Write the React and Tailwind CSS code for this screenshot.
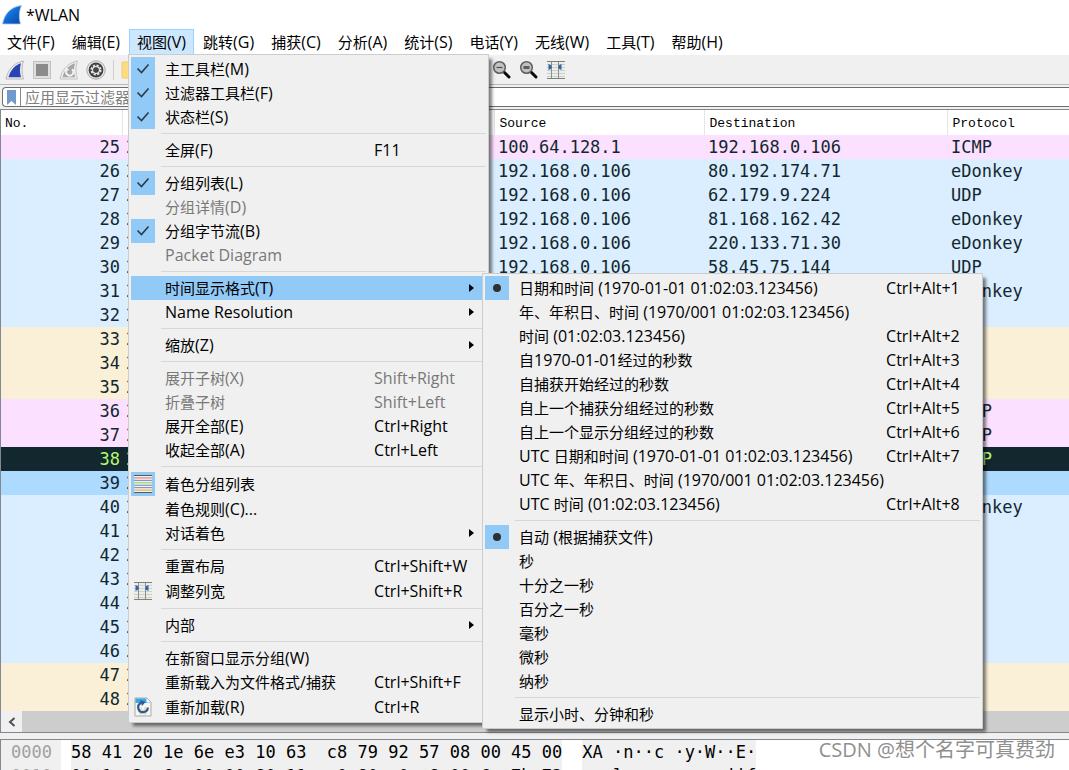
const UI = "font-['Open_Sans','Noto_Sans_CJK_SC',sans-serif]";
const MONO = "font-['DejaVu_Sans_Mono','Noto_Sans_CJK_SC',monospace]";
const HEAD = "font-['Liberation_Mono','Noto_Sans_CJK_SC',monospace]";

function Logo() {
  return (
    <svg width="20" height="20" viewBox="0 0 20 20" aria-hidden="true">
      <defs>
        <linearGradient id="logo" x1="0" y1="0" x2="1" y2="1">
          <stop offset="0" stopColor="#3fa0ee" />
          <stop offset="0.5" stopColor="#0f6ad2" />
          <stop offset="1" stopColor="#0a48a6" />
        </linearGradient>
      </defs>
      <path d="M0.5 19 C2.5 9 8 2 19.5 0.5 C17 6 16.8 13 18.5 19 Z" fill="url(#logo)" stroke="#a9cdf0" strokeWidth="0.8" />
    </svg>
  );
}

function FinIcon() {
  return (
    <svg width="20" height="20" viewBox="0 0 20 20" aria-hidden="true">
      <path d="M1 19 C3 10 8 3 18.5 1 C16.5 7 16.5 12 18.5 19 Z" fill="#ececec" stroke="#b8b8b8" strokeWidth="1" />
      <path d="M3.5 17.3 C5.5 10 10 5 16 3.2 C14.6 8 14.6 12 16 17.3 Z" fill="#2a43b4" />
    </svg>
  );
}

function StopIcon() {
  return (
    <svg width="20" height="20" viewBox="0 0 20 20" aria-hidden="true">
      <rect x="1.5" y="1.5" width="17" height="17" fill="#dedede" stroke="#c2c2c2" />
      <rect x="4" y="4" width="12" height="12" fill="#8a8a8a" />
    </svg>
  );
}

function RestartIcon() {
  return (
    <svg width="20" height="20" viewBox="0 0 20 20" aria-hidden="true">
      <path d="M1 19 C3 10 8 3 18.5 1 C16.5 7 16.5 12 18.5 19 Z" fill="#ececec" stroke="#c4c4c4" strokeWidth="1" />
      <path d="M3.5 17.3 C5.5 10 10 5 16 3.2 C14.6 8 14.6 12 16 17.3 Z" fill="#a6a6a6" />
      <path d="M13 9.2 A3.6 3.6 0 1 1 7.6 10.4" fill="none" stroke="#f6f6f6" strokeWidth="1.8" />
      <path d="M5.8 11.2 L7.2 7.4 L10.4 10 Z" fill="#f6f6f6" />
    </svg>
  );
}

function OptionsIcon() {
  return (
    <svg width="20" height="20" viewBox="0 0 20 20" aria-hidden="true">
      <circle cx="10" cy="10" r="9.2" fill="#e6e6e6" stroke="#a8a8a8" />
      <circle cx="10" cy="10" r="7.4" fill="#404040" />
      <circle cx="10" cy="10" r="4.6" fill="none" stroke="#e4e4e4" strokeWidth="2" strokeDasharray="2.2 1.41" />
      <circle cx="10" cy="10" r="3.4" fill="none" stroke="#e4e4e4" strokeWidth="1.2" />
      <circle cx="10" cy="10" r="2.4" fill="#444444" />
    </svg>
  );
}

function FolderIcon() {
  return (
    <svg width="20" height="20" viewBox="0 0 20 20" aria-hidden="true">
      <path d="M1 2 H8 L10 4 H18 V18 H1 Z" fill="#fbdc83" stroke="#f0cd6c" />
    </svg>
  );
}

function Magnifier({ reset }) {
  return (
    <svg width="20" height="20" viewBox="0 0 20 20" aria-hidden="true">
      <path d="M12 12 L17 17" stroke="#0a0a0a" strokeWidth="3" strokeLinecap="round" />
      <circle cx="7.5" cy="7.5" r="5.8" fill="#c0c2c3" stroke="#5c5e60" strokeWidth="1.5" />
      {reset ? (
        <rect x="4.5" y="6" width="6" height="3" fill="#5a5c5e" />
      ) : (
        <path d="M4.5 7.5 H10.5" stroke="#4a4c4e" strokeWidth="1.2" />
      )}
    </svg>
  );
}

function ColumnsIcon() {
  return (
    <svg width="20" height="20" viewBox="0 0 20 20" aria-hidden="true">
      <rect x="1" y="1" width="18" height="18" fill="#eceeea" />
      <path d="M1 4.5 H19 M1 7.5 H19 M1 10.5 H19 M1 13.5 H19 M1 16.5 H19" stroke="#cdd2c8" />
      <path d="M1 1.5 H19 M1 18.5 H19" stroke="#7d7f7b" />
      <path d="M5.5 2 V18 M12.5 2 V18" stroke="#8c8f8a" />
      <path d="M2.5 4 L5.5 5.5 V8.5 L2.5 10 Z M15.5 4 L12.5 5.5 V8.5 L15.5 10 Z" fill="#2e63ad" />
    </svg>
  );
}

function ColorizeIcon() {
  const lines = ['#5a5a5a', '#e07070', '#5b8fd0', '#8fd04c', '#5b8fd0', '#8a80b0', '#d0b040', '#5a5a5a'];
  return (
    <svg width="20" height="20" viewBox="0 0 20 20" aria-hidden="true">
      <rect x="1" y="1" width="18" height="18" fill="#f3f1ea" />
      {lines.map((c, i) => (
        <rect key={i} x="1" y={1 + i * 2.43} width="18" height="1" fill={c} />
      ))}
    </svg>
  );
}

function ReloadIcon() {
  return (
    <svg width="20" height="20" viewBox="0 0 20 20" aria-hidden="true">
      <path d="M2 1 H14 L18 5 V19 H2 Z" fill="#f7f7f0" stroke="#a9aba4" />
      <path d="M2.5 1.5 H14 L17.5 5 V6 H2.5 Z" fill="#3aa7e6" />
      <path d="M13.5 1 L18 5.5 H13.5 Z" fill="#fff" />
      <path d="M6 13 h8 M6 16 h8 M8 10 v8 M12 10 v8" stroke="#cfd1c8" />
      <path d="M8 6 A4.8 4.8 0 1 0 14.8 10.5" fill="none" stroke="#33588f" strokeWidth="2.2" />
      <path d="M7 3 L12.5 5 L9 9 Z" fill="#33588f" />
    </svg>
  );
}

function Check() {
  return (
    <svg width="14" height="12" viewBox="0 0 14 12" aria-hidden="true">
      <path d="M1.5 5.5 L5.5 9.5 L12.5 1.5" fill="none" stroke="#2c3a46" strokeWidth="1.6" />
    </svg>
  );
}

function Bullet() {
  return (
    <svg width="8" height="8" viewBox="0 0 8 8" aria-hidden="true">
      <circle cx="4" cy="4" r="4" fill="#303030" />
    </svg>
  );
}

function Arrow() {
  return (
    <svg width="5" height="8" viewBox="0 0 5 8" aria-hidden="true">
      <path d="M0 0 L5 4 L0 8 Z" fill="#000" />
    </svg>
  );
}

const TIME_FORMATS = [
  { label: '日期和时间 (1970-01-01 01:02:03.123456)', keys: 'Ctrl+Alt+1', mark: 'bullet' },
  { label: '年、年积日、时间 (1970/001 01:02:03.123456)' },
  { label: '时间 (01:02:03.123456)', keys: 'Ctrl+Alt+2' },
  { label: '自1970-01-01经过的秒数', keys: 'Ctrl+Alt+3' },
  { label: '自捕获开始经过的秒数', keys: 'Ctrl+Alt+4' },
  { label: '自上一个捕获分组经过的秒数', keys: 'Ctrl+Alt+5' },
  { label: '自上一个显示分组经过的秒数', keys: 'Ctrl+Alt+6' },
  { label: 'UTC 日期和时间 (1970-01-01 01:02:03.123456)', keys: 'Ctrl+Alt+7' },
  { label: 'UTC 年、年积日、时间 (1970/001 01:02:03.123456)' },
  { label: 'UTC 时间 (01:02:03.123456)', keys: 'Ctrl+Alt+8' },
  null,
  { label: '自动 (根据捕获文件)', mark: 'bullet' },
  { label: '秒' },
  { label: '十分之一秒' },
  { label: '百分之一秒' },
  { label: '毫秒' },
  { label: '微秒' },
  { label: '纳秒' },
  null,
  { label: '显示小时、分钟和秒' },
];

const VIEW_MENU = [
  { label: '主工具栏(M)', mark: 'check' },
  { label: '过滤器工具栏(F)', mark: 'check' },
  { label: '状态栏(S)', mark: 'check' },
  null,
  { label: '全屏(F)', keys: 'F11' },
  null,
  { label: '分组列表(L)', mark: 'check' },
  { label: '分组详情(D)', disabled: true },
  { label: '分组字节流(B)', mark: 'check' },
  { label: 'Packet Diagram', disabled: true },
  null,
  { label: '时间显示格式(T)', submenu: TIME_FORMATS, open: true },
  { label: 'Name Resolution', submenu: [] },
  null,
  { label: '缩放(Z)', submenu: [] },
  null,
  { label: '展开子树(X)', keys: 'Shift+Right', disabled: true },
  { label: '折叠子树', keys: 'Shift+Left', disabled: true },
  { label: '展开全部(E)', keys: 'Ctrl+Right' },
  { label: '收起全部(A)', keys: 'Ctrl+Left' },
  null,
  { label: '着色分组列表', icon: <ColorizeIcon />, marked: true },
  { label: '着色规则(C)...' },
  { label: '对话着色', submenu: [] },
  null,
  { label: '重置布局', keys: 'Ctrl+Shift+W' },
  { label: '调整列宽', keys: 'Ctrl+Shift+R', icon: <ColumnsIcon /> },
  null,
  { label: '内部', submenu: [] },
  null,
  { label: '在新窗口显示分组(W)' },
  { label: '重新载入为文件格式/捕获', keys: 'Ctrl+Shift+F' },
  { label: '重新加载(R)', keys: 'Ctrl+R', icon: <ReloadIcon /> },
];

// Latin runs are set one size above the Chinese text around them.
function Mixed({ text }) {
  return text.split(/([\x20-\x7e]+)/).map((part, i) =>
    i % 2 ? (
      <span key={i} className="text-[16px]">
        {part}
      </span>
    ) : (
      part
    ),
  );
}

function Menu({ items, keysWidth, label }) {
  return (
    <ul
      role="menu"
      aria-label={label}
      className="w-full border border-[#cccccc] bg-[#f0f0f0] px-0.5 py-0.5 text-left text-[15px] leading-6 text-black shadow-[4px_4px_3px_-1px_rgba(0,0,0,0.5)]"
    >
      {items.map((item, i) =>
        item === null ? (
          <li key={i} role="separator" className="flex h-[9px] items-center pl-[30px]">
            <span className="h-px w-full bg-[#d7d7d7]" />
          </li>
        ) : (
          <li key={i} role="none" className="relative">
            <button
              role="menuitem"
              type="button"
              disabled={item.disabled}
              className={`flex w-full items-center whitespace-nowrap text-left disabled:text-[#787878] ${
                item.icon ? 'h-[26px]' : 'h-6'
              } ${item.open ? 'bg-[#91c9f7]' : ''}`}
            >
              <span
                className={`mr-2.5 flex size-6 shrink-0 items-center justify-center ${
                  item.mark || item.marked ? 'bg-[#91c9f7]' : ''
                }`}
              >
                {item.mark === 'check' && <Check />}
                {item.mark === 'bullet' && <Bullet />}
                {item.icon}
              </span>
              <span className="flex-1 whitespace-pre">
                <Mixed text={item.label} />
              </span>
              {item.keys && <span className={`text-[16px] ${keysWidth}`}>{item.keys}</span>}
              {item.submenu && (
                <span className="mr-3">
                  <Arrow />
                </span>
              )}
            </button>
            {item.open && (
              <div className="absolute -top-[3px] left-[351px] z-20 w-[501px]">
                <Menu items={item.submenu} keysWidth="w-[94px]" label={item.label} />
              </div>
            )}
          </li>
        ),
      )}
    </ul>
  );
}

const MENUS = [
  '文件(F)', '编辑(E)', '视图(V)', '跳转(G)', '捕获(C)', '分析(A)', '统计(S)', '电话(Y)', '无线(W)', '工具(T)', '帮助(H)',
];

const TONES = {
  pink: 'bg-[#fce0ff] text-[#12272e]',
  blue: 'bg-[#daeeff] text-[#12272e]',
  cream: 'bg-[#faf0d7] text-[#12272e]',
  black: 'bg-[#12272e] text-[#b7f774]',
  selected: 'bg-[#addaff] text-[#12272e]',
};

const PACKETS = [
  [25, 'pink', '100.64.128.1', '192.168.0.106', 'ICMP'],
  [26, 'blue', '192.168.0.106', '80.192.174.71', 'eDonkey'],
  [27, 'blue', '192.168.0.106', '62.179.9.224', 'UDP'],
  [28, 'blue', '192.168.0.106', '81.168.162.42', 'eDonkey'],
  [29, 'blue', '192.168.0.106', '220.133.71.30', 'eDonkey'],
  [30, 'blue', '192.168.0.106', '58.45.75.144', 'UDP'],
  [31, 'blue', '', '', 'eDonkey'],
  [32, 'blue', '', '', ''],
  [33, 'cream', '', '', ''],
  [34, 'cream', '', '', ''],
  [35, 'cream', '', '', ''],
  [36, 'pink', '', '', 'ICMP'],
  [37, 'pink', '', '', 'ICMP'],
  [38, 'black', '', '', 'ICMP'],
  [39, 'selected', '', '', ''],
  [40, 'blue', '', '', 'eDonkey'],
  [41, 'blue', '', '', ''],
  [42, 'blue', '', '', ''],
  [43, 'blue', '', '', ''],
  [44, 'blue', '', '', ''],
  [45, 'blue', '', '', ''],
  [46, 'blue', '', '', ''],
  [47, 'cream', '', '', ''],
  [48, 'cream', '', '', ''],
];

const HEX = [
  ['0000', '58 41 20 1e 6e e3 10 63  c8 79 92 57 08 00 45 00', 'XA ·n··c ·y·W··E·'],
  ['0010', '00 1c 2c 6c 00 00 80 11  c0 80 c0 a8 00 6a 7b 73', '··,l···· ·····jif'],
];

function Tool({ label, children }) {
  return (
    <button type="button" aria-label={label} className="flex size-5 items-center justify-center">
      {children}
    </button>
  );
}

export default function App() {
  return (
    <div className={`flex h-screen w-full flex-col overflow-hidden bg-[#f0f0f0] text-[15px] text-black ${UI}`}>
      <header className="flex h-[29px] shrink-0 items-center gap-1 bg-white pl-0.5">
        <Logo />
        <h1 className="text-[16px]">*WLAN</h1>
      </header>

      <nav aria-label="主菜单" className="-ml-px flex h-[26px] shrink-0 items-stretch gap-px bg-white">
        {MENUS.map((name, i) => (
          <div key={name} className="relative flex">
            <button
              type="button"
              className={`border px-[7px] leading-6 whitespace-nowrap ${
                i === 2 ? 'border-[#99d1ff] bg-[#cce8ff]' : 'border-transparent'
              }`}
            >
              <Mixed text={name} />
            </button>
            {i === 2 && (
              <div className="absolute top-[25px] -left-px z-10 w-[361px]">
                <Menu items={VIEW_MENU} keysWidth="w-[112px]" label={name} />
              </div>
            )}
          </div>
        ))}
      </nav>

      <div className="flex h-[30px] shrink-0 items-center border-b border-[#b8b8b8] pl-[5px]">
        <div className="flex flex-1 items-center gap-[7px]">
          <Tool label="开始捕获"><FinIcon /></Tool>
          <Tool label="停止捕获"><StopIcon /></Tool>
          <Tool label="重新开始捕获"><RestartIcon /></Tool>
          <Tool label="捕获选项"><OptionsIcon /></Tool>
          <span className="h-5 w-px bg-[#cfcfcf]" />
          <Tool label="打开"><FolderIcon /></Tool>
          <div className="ml-[344px] flex gap-[7px]">
            <Tool label="缩小"><Magnifier /></Tool>
            <Tool label="正常大小"><Magnifier reset /></Tool>
            <Tool label="调整列宽"><ColumnsIcon /></Tool>
          </div>
        </div>
      </div>

      <div className="flex h-6 shrink-0 flex-col py-0.5 pl-0.5">
        <div className="flex min-h-0 flex-1 items-stretch rounded-l border border-r-0 border-[#6e6e6e] bg-white">
          <button type="button" aria-label="书签" className="flex w-[18px] items-center justify-center border-r border-[#8a8a8a]">
            <svg width="9" height="15" viewBox="0 0 9 15" aria-hidden="true">
              <path d="M0 0 H9 V15 L4.5 11 L0 15 Z" fill="#7299cc" />
            </svg>
          </button>
          <input
            type="text"
            aria-label="显示过滤器"
            placeholder="应用显示过滤器"
            className="min-w-0 flex-1 bg-transparent pl-1 text-[15px] outline-none placeholder:text-[#808080]"
          />
        </div>
      </div>

      <main className="flex shrink-0 flex-col border border-r-0 border-[#828790] bg-white">
        <table className="w-full table-fixed border-collapse">
          <colgroup>
            <col className="w-[121px]" />
            <col className="w-[372px]" />
            <col className="w-[210px]" />
            <col className="w-[243px]" />
            <col />
          </colgroup>
          <thead>
            <tr className={`h-[25px] text-left text-[13px] ${HEAD}`}>
              <th className="border-r border-[#e5e5e5] p-0 pt-0.5 pl-1 font-normal">No.</th>
              <th className="border-r border-[#e5e5e5] p-0 font-normal" aria-label="Time" />
              <th className="border-r border-[#e5e5e5] p-0 pt-0.5 pl-[5px] font-normal">Source</th>
              <th className="border-r border-[#e5e5e5] p-0 pt-0.5 pl-[5px] font-normal">Destination</th>
              <th className="p-0 pt-0.5 pl-[5px] font-normal">Protocol</th>
            </tr>
          </thead>
          <tbody className={`text-[17px] leading-6 ${MONO}`}>
            {PACKETS.map(([no, tone, src, dst, proto]) => (
              <tr key={no} className={`h-6 ${TONES[tone]}`}>
                <td className="p-0 pr-0.5 text-right">{no}</td>
                <td className="p-0 pl-1">2</td>
                <td className="p-0 pl-1">{src}</td>
                <td className="p-0 pl-1">{dst}</td>
                <td className="p-0 pl-1">{proto}</td>
              </tr>
            ))}
          </tbody>
        </table>
        <div className="flex h-[21px] items-stretch bg-[#cdcdcd]">
          <button type="button" aria-label="向左滚动" className="flex w-[21px] items-center justify-center bg-[#f0f0f0]">
            <svg width="8" height="10" viewBox="0 0 8 10" aria-hidden="true">
              <path d="M6.5 1 L2 5 L6.5 9" fill="none" stroke="#505050" strokeWidth="2" />
            </svg>
          </button>
        </div>
      </main>

      <section
        aria-label="分组字节流"
        className={`mt-1.5 flex min-h-0 flex-1 flex-col overflow-hidden border-t border-l border-[#828790] bg-white text-[17px] leading-6 whitespace-pre ${MONO}`}
      >
        {HEX.map(([offset, bytes, ascii]) => (
          <div key={offset} className="flex shrink-0">
            <span className="w-[60px] bg-[#f0f0f0] pl-2.5 text-[#a0a0a0]">{offset}</span>
            <span className="ml-2.5 bg-[#f0f0f0]">{bytes}</span>
            <span className="ml-5 bg-[#f0f0f0]">{ascii}</span>
          </div>
        ))}
      </section>

      <div className="absolute right-3.5 bottom-1 text-[20px] leading-8 text-[#8f8f8f] [text-shadow:1px_1px_0_#fff]">
        CSDN @想个名字可真费劲
      </div>
    </div>
  );
}
